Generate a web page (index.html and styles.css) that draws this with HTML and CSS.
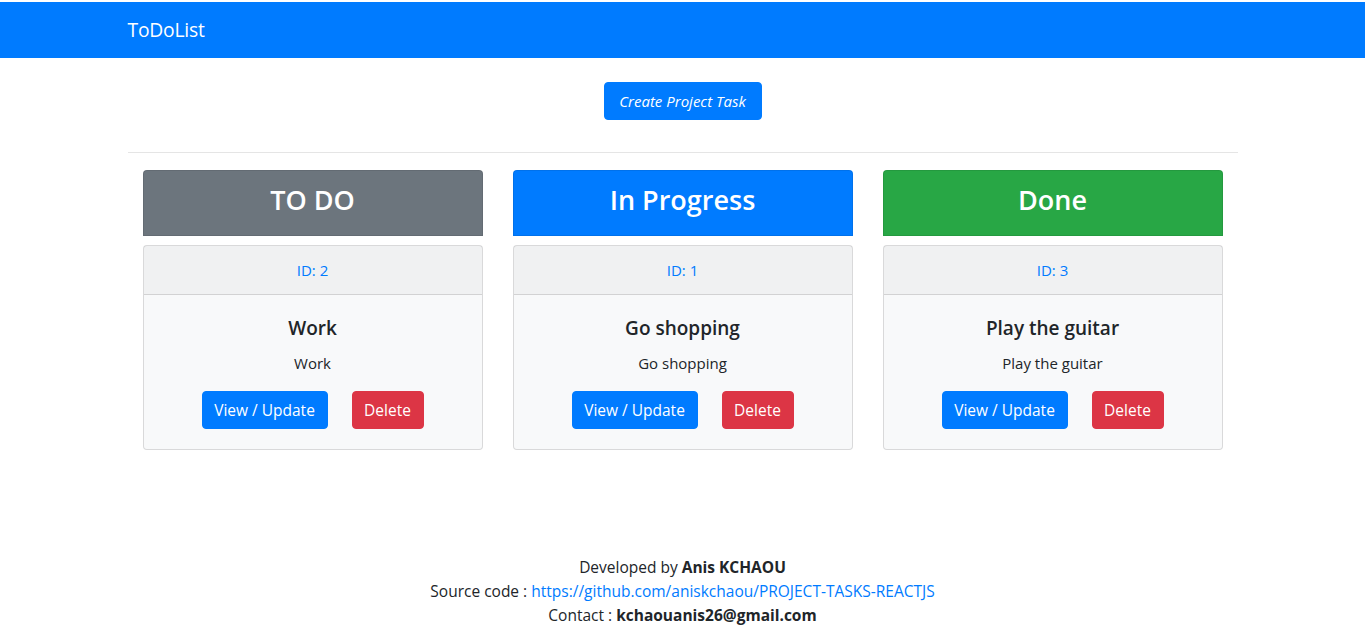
FILE: index.html
```html
<!DOCTYPE html>
<html lang="en">
<head>
<meta charset="utf-8">
<title>ToDoList</title>
<link rel="stylesheet" href="styles.css">
</head>
<body>
<nav class="navbar">
  <div class="container">
    <a class="brand" href="#">ToDoList</a>
  </div>
</nav>
<main class="container">
  <div class="create-wrap">
    <a class="btn btn-primary create" href="#">Create Project Task</a>
  </div>
  <hr class="divider">
  <div class="board">
    <section class="column">
      <div class="col-head bg-secondary"><h3>TO DO</h3></div>
      <div class="task">
        <div class="task-head">ID: 2</div>
        <div class="task-body">
          <h5>Work</h5>
          <p>Work</p>
          <div class="actions">
            <a class="btn btn-primary" href="#">View / Update</a>
            <button class="btn btn-danger">Delete</button>
          </div>
        </div>
      </div>
    </section>
    <section class="column">
      <div class="col-head bg-primary"><h3>In Progress</h3></div>
      <div class="task">
        <div class="task-head">ID: 1</div>
        <div class="task-body">
          <h5>Go shopping</h5>
          <p>Go shopping</p>
          <div class="actions">
            <a class="btn btn-primary" href="#">View / Update</a>
            <button class="btn btn-danger">Delete</button>
          </div>
        </div>
      </div>
    </section>
    <section class="column">
      <div class="col-head bg-success"><h3>Done</h3></div>
      <div class="task">
        <div class="task-head">ID: 3</div>
        <div class="task-body">
          <h5>Play the guitar</h5>
          <p>Play the guitar</p>
          <div class="actions">
            <a class="btn btn-primary" href="#">View / Update</a>
            <button class="btn btn-danger">Delete</button>
          </div>
        </div>
      </div>
    </section>
  </div>
</main>
<footer class="footer">
  <div>Developed by <strong>Anis KCHAOU</strong></div>
  <div>Source code : <a href="#">https://github.com/aniskchaou/PROJECT-TASKS-REACTJS</a></div>
  <div>Contact : <strong>kchaouanis26@gmail.com</strong></div>
</footer>
</body>
</html>
```

FILE: styles.css
```css
* { box-sizing: border-box; }
html, body { margin: 0; }
body {
  font-family: "Open Sans", "Noto Sans", sans-serif;
  font-size: 16px;
  line-height: 24px;
  color: #212529;
  background: #fff;
  padding-top: 2px;
}
a { text-decoration: none; color: #007bff; }

.container {
  width: 1140px;
  margin: 0 auto;
  padding: 0 15px;
}

.navbar {
  background: #007bff;
  height: 56px;
  display: flex;
  align-items: center;
}
.brand {
  color: #fff;
  font-size: 19.3px;
  line-height: 30px;
  letter-spacing: -0.2px;
}

.create-wrap {
  display: flex;
  justify-content: center;
  padding-top: 24px;
}
.btn {
  display: inline-block;
  font-family: inherit;
  font-size: 15.5px;
  line-height: 24px;
  padding: 6px 0;
  border: 1px solid transparent;
  border-radius: 4px;
  color: #fff;
  cursor: pointer;
  text-align: center;
  white-space: nowrap;
}
.btn-primary { background: #007bff; border-color: #007bff; }
.btn-danger { background: #dc3545; border-color: #dc3545; }
.create { font-style: italic; width: 158px; font-size: 15px; }

.divider {
  border: 0;
  border-top: 1px solid rgba(0,0,0,.1);
  margin: 32px 0 17px;
}

.board {
  display: grid;
  grid-template-columns: repeat(3, 340px);
  column-gap: 30px;
  padding: 0 15px;
}

.col-head {
  height: 66px;
  border-radius: 4px 4px 0 0;
  border: 1px solid rgba(0,0,0,.08);
  color: #fff;
  display: flex;
  align-items: flex-start;
  justify-content: center;
  padding-top: 11px;
}
.col-head h3 {
  margin: 0;
  font-size: 27px;
  line-height: 35px;
  font-weight: 600;
}
.bg-secondary { background: #6c757d; }
.bg-primary { background: #007bff; }
.bg-success { background: #28a745; }

.task {
  margin-top: 9px;
  background: #f8f9fa;
  border: 1px solid rgba(0,0,0,.125);
  border-radius: 4px;
  text-align: center;
}
.task-head {
  background: rgba(0,0,0,.03);
  border-bottom: 1px solid rgba(0,0,0,.125);
  padding: 12px 20px;
  color: #007bff;
  font-size: 15px;
}
.task-body {
  padding: 21px 20px 20px;
}
.task-body h5 {
  margin: 0 0 11px;
  font-size: 19px;
  line-height: 24px;
  font-weight: 600;
}
.task-body p {
  margin: 0 0 16px;
  font-size: 15px;
}
.actions {
  display: flex;
  justify-content: center;
  gap: 24px;
}
.actions .btn-primary { width: 126px; }
.actions .btn-danger { width: 72px; }

.footer {
  margin-top: 105px;
  text-align: center;
  font-size: 15.5px;
  line-height: 24px;
}
.footer strong { font-weight: 700; }
```
